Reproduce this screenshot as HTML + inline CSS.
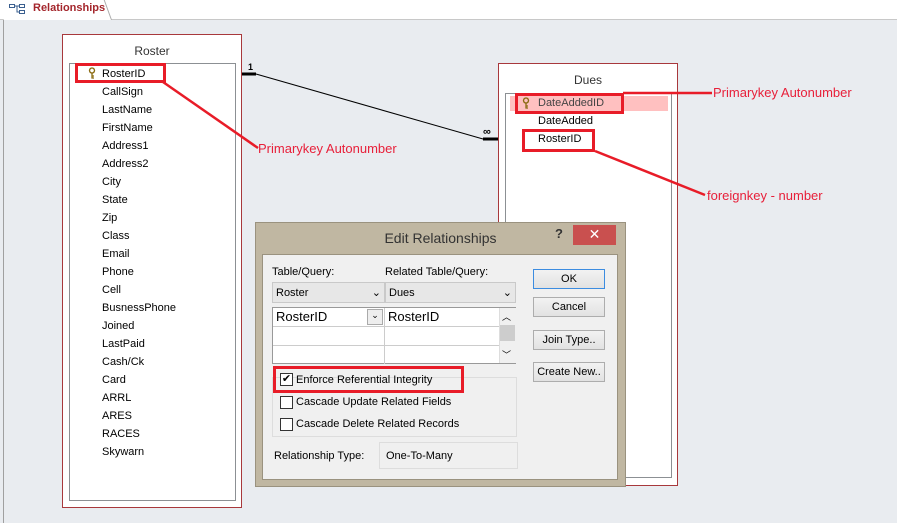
<!DOCTYPE html>
<html><head><meta charset="utf-8"><style>
*{margin:0;padding:0;box-sizing:border-box}
body{width:897px;height:523px;background:#e9ecf0;font-family:"Liberation Sans",Arial,sans-serif;position:relative;overflow:hidden;font-size:11px;color:#000}
.a{position:absolute}
.f{position:absolute;left:32px;font-size:11px}
.red{color:#e8203a;font-size:13px}
.rb{position:absolute;border:3px solid #e81c28}
.btn{position:absolute;left:270px;width:72px;height:20px;border:1px solid #adadad;background:linear-gradient(#f2f2f2,#e2e2e2);text-align:center;line-height:18px;font-size:11px}
</style></head><body>
<div class="a" style="left:0;top:0;width:897px;height:19px;background:#fff"></div>
<div class="a" style="left:3px;top:19px;width:1px;height:504px;background:#a0a0a0"></div>
<div class="a" style="left:0;top:19px;width:897px;height:1px;background:#c8c8c8"></div>
<div class="a" style="left:4px;top:0;width:108px;height:20px;background:#fff;border-right:1px solid #aaa;transform:skewX(20deg);transform-origin:bottom"></div>
<svg class="a" style="left:8px;top:3px" width="18" height="12"><g fill="none" stroke="#3a5f8f"><rect x="1.5" y="1.5" width="5" height="3"/><rect x="11.5" y="1.5" width="5" height="3"/><rect x="11.5" y="7.5" width="5" height="3"/><path d="M6 3h6M9 3v6h3"/></g></svg>
<div class="a" style="left:33px;top:2px;font-size:11px;font-weight:bold;color:#a4262c">Relationships</div>

<svg class="a" style="left:0;top:0" width="897" height="523">
<line x1="256" y1="74" x2="483" y2="139" stroke="#000" stroke-width="1"/>
<line x1="241" y1="74" x2="256" y2="74" stroke="#000" stroke-width="3"/>
<line x1="483" y1="139" x2="498" y2="139" stroke="#000" stroke-width="3"/>
</svg>
<div class="a" style="left:248px;top:62px;font-size:9px;font-weight:bold">1</div>
<div class="a" style="left:483px;top:126px;font-size:11px;font-weight:bold">∞</div>

<!-- Roster -->
<div class="a" style="left:62px;top:34px;width:180px;height:474px;background:#fff;border:1px solid #a8383c"></div>
<div class="a" style="left:62px;top:44px;width:180px;text-align:center;font-size:12px;color:#333">Roster</div>
<div class="a" style="left:69px;top:63px;width:167px;height:438px;border:1px solid #8c9094;background:#fff">
<svg class="a" style="left:18px;top:3px" width="8" height="12"><path d="M4 1a2.5 2.5 0 1 0 .01 0M4 6v5h2M4 9h2" fill="none" stroke="#8a6a10" stroke-width="1.3"/></svg>
<div class="f" style="top:4px">RosterID</div>
<div class="f" style="top:22px">CallSign</div>
<div class="f" style="top:40px">LastName</div>
<div class="f" style="top:58px">FirstName</div>
<div class="f" style="top:76px">Address1</div>
<div class="f" style="top:94px">Address2</div>
<div class="f" style="top:112px">City</div>
<div class="f" style="top:130px">State</div>
<div class="f" style="top:148px">Zip</div>
<div class="f" style="top:166px">Class</div>
<div class="f" style="top:184px">Email</div>
<div class="f" style="top:202px">Phone</div>
<div class="f" style="top:220px">Cell</div>
<div class="f" style="top:238px">BusnessPhone</div>
<div class="f" style="top:256px">Joined</div>
<div class="f" style="top:274px">LastPaid</div>
<div class="f" style="top:292px">Cash/Ck</div>
<div class="f" style="top:310px">Card</div>
<div class="f" style="top:328px">ARRL</div>
<div class="f" style="top:346px">ARES</div>
<div class="f" style="top:364px">RACES</div>
<div class="f" style="top:382px">Skywarn</div>
</div>

<!-- Dues -->
<div class="a" style="left:498px;top:63px;width:180px;height:423px;background:#fff;border:1px solid #a8383c"></div>
<div class="a" style="left:498px;top:73px;width:180px;text-align:center;font-size:12px;color:#333">Dues</div>
<div class="a" style="left:505px;top:93px;width:167px;height:385px;border:1px solid #8c9094;background:#fff">
<div class="a" style="left:4px;top:2px;width:158px;height:15px;background:#ffc0c0"></div>
<svg class="a" style="left:16px;top:3px" width="8" height="12"><path d="M4 1a2.5 2.5 0 1 0 .01 0M4 6v5h2M4 9h2" fill="none" stroke="#8a6a10" stroke-width="1.3"/></svg>
<div class="a" style="left:32px;top:3px;color:#444">DateAddedID</div>
<div class="a" style="left:32px;top:21px">DateAdded</div>
<div class="a" style="left:32px;top:39px">RosterID</div>
</div>

<!-- Dialog -->
<div class="a" style="left:255px;top:222px;width:371px;height:265px;background:#c0b7a2;border:1px solid #9a927f"></div>
<div class="a" style="left:255px;top:230px;width:371px;text-align:center;font-size:14px;color:#333">Edit Relationships</div>
<div class="a" style="left:555px;top:226px;font-size:13px;font-weight:bold;color:#333">?</div>
<div class="a" style="left:573px;top:225px;width:43px;height:20px;background:#c9504f;color:#fff;text-align:center;font-size:14px;line-height:19px">✕</div>
<div class="a" style="left:262px;top:254px;width:356px;height:226px;background:#f0f0f0;border:1px solid #9a927f">
<div class="a" style="left:9px;top:11px">Table/Query:</div>
<div class="a" style="left:122px;top:11px">Related Table/Query:</div>
<div class="a" style="left:9px;top:27px;width:113px;height:21px;border:1px solid #c9c9c9;background:#e7e7e7;padding:4px 3px">Roster<span style="position:absolute;right:3px;top:3px">⌄</span></div>
<div class="a" style="left:122px;top:27px;width:131px;height:21px;border:1px solid #c9c9c9;background:#e7e7e7;padding:4px 3px">Dues<span style="position:absolute;right:3px;top:3px">⌄</span></div>
<div class="a" style="left:9px;top:52px;width:244px;height:57px;border:1px solid #999;background:#fff">
<div class="a" style="left:0;top:0;width:112px;height:19px;border-right:1px solid #ccc;border-bottom:1px solid #ccc;font-size:13px;padding:1px 3px">RosterID</div>
<div class="a" style="left:94px;top:1px;width:16px;height:16px;border:1px solid #aaa;background:#eee;text-align:center;font-size:9px">⌄</div>
<div class="a" style="left:112px;top:0;width:114px;height:19px;border-bottom:1px solid #ccc;font-size:13px;padding:1px 3px">RosterID</div>
<div class="a" style="left:0;top:19px;width:112px;height:19px;border-right:1px solid #ccc;border-bottom:1px solid #ccc"></div>
<div class="a" style="left:112px;top:19px;width:114px;height:19px;border-bottom:1px solid #ccc"></div>
<div class="a" style="left:0;top:38px;width:112px;height:18px;border-right:1px solid #ccc"></div>
<div class="a" style="left:226px;top:0;width:17px;height:55px;background:#f0f0f0;border-left:1px solid #ddd"></div>
<div class="a" style="left:227px;top:17px;width:15px;height:16px;background:#cdcdcd"></div>
<div class="a" style="left:229px;top:2px;font-size:9px">︿</div>
<div class="a" style="left:229px;top:40px;font-size:9px">﹀</div>
</div>
<div class="a" style="left:9px;top:122px;width:245px;height:60px;border:1px solid #ddd"></div>
<div class="a" style="left:17px;top:118px;width:13px;height:13px;border:1px solid #333;background:#fff;font-size:11px;line-height:11px;text-align:center">✔</div>
<div class="a" style="left:33px;top:119px">Enforce Referential Integrity</div>
<div class="a" style="left:17px;top:141px;width:13px;height:13px;border:1px solid #333;background:#fff"></div>
<div class="a" style="left:33px;top:141px">Cascade Update Related Fields</div>
<div class="a" style="left:17px;top:163px;width:13px;height:13px;border:1px solid #333;background:#fff"></div>
<div class="a" style="left:33px;top:163px">Cascade Delete Related Records</div>
<div class="a" style="left:11px;top:195px">Relationship Type:</div>
<div class="a" style="left:116px;top:187px;width:139px;height:27px;border:1px solid #ddd;padding:7px 6px">One-To-Many</div>
<div class="btn" style="top:14px;border-color:#3c8ce0">OK</div>
<div class="btn" style="top:42px">Cancel</div>
<div class="btn" style="top:75px">Join Type..</div>
<div class="btn" style="top:107px">Create New..</div>
</div>

<!-- annotations on top -->
<svg class="a" style="left:0;top:0" width="897" height="523">
<line x1="163" y1="82" x2="258" y2="148" stroke="#e81c28" stroke-width="2.5"/>
<line x1="623" y1="93" x2="712" y2="93" stroke="#e81c28" stroke-width="2.5"/>
<line x1="595" y1="151" x2="705" y2="195" stroke="#e81c28" stroke-width="2.5"/>
</svg>
<div class="rb" style="left:75px;top:63px;width:91px;height:20px"></div>
<div class="a red" style="left:258px;top:141px">Primarykey Autonumber</div>
<div class="rb" style="left:515px;top:93px;width:109px;height:21px"></div>
<div class="rb" style="left:522px;top:129px;width:73px;height:23px"></div>
<div class="a red" style="left:713px;top:85px">Primarykey Autonumber</div>
<div class="a red" style="left:707px;top:188px">foreignkey - number</div>
<div class="rb" style="left:273px;top:366px;width:191px;height:27px"></div>
</body></html>
